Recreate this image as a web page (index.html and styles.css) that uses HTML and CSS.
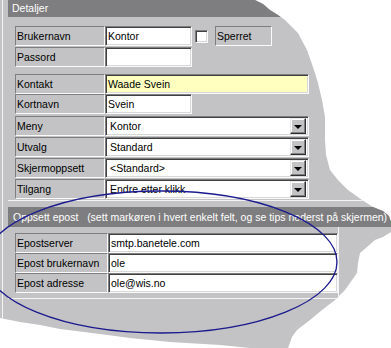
FILE: index.html
```html
<!DOCTYPE html>
<html lang="no">
<head>
<meta charset="utf-8">
<title>Detaljer</title>
<link rel="stylesheet" href="styles.css">
</head>
<body>
<div class="stage">
  <div class="sheet">
    <div class="frame">
      <section class="panel">
        <div class="hdr">Detaljer</div>
        <div class="body">
          <div class="group g1">
            <div class="row">
              <div class="lbl">Brukernavn</div>
              <div class="inp w87">Kontor</div>
              <div class="chk"></div>
              <div class="flag">Sperret</div>
            </div>
            <div class="row">
              <div class="lbl">Passord</div>
              <div class="inp w87"></div>
            </div>
          </div>
          <div class="group g2">
            <div class="row">
              <div class="lbl">Kontakt</div>
              <div class="inp w204 yellow">Waade Svein</div>
            </div>
            <div class="row">
              <div class="lbl">Kortnavn</div>
              <div class="inp w87">Svein</div>
            </div>
          </div>
          <div class="group g3">
            <div class="row">
              <div class="lbl">Meny</div>
              <div class="inp w204 sel"><span class="val">Kontor</span><span class="btn"><i></i></span></div>
            </div>
            <div class="row">
              <div class="lbl">Utvalg</div>
              <div class="inp w204 sel"><span class="val">Standard</span><span class="btn"><i></i></span></div>
            </div>
            <div class="row">
              <div class="lbl">Skjermoppsett</div>
              <div class="inp w204 sel"><span class="val">&lt;Standard&gt;</span><span class="btn"><i></i></span></div>
            </div>
            <div class="row">
              <div class="lbl">Tilgang</div>
              <div class="inp w204 sel"><span class="val">Endre etter klikk</span><span class="btn"><i></i></span></div>
            </div>
          </div>
        </div>
      </section>
      <section class="panel epost">
        <div class="hdr hdr2">Oppsett epost   (sett markøren i hvert enkelt felt, og se tips nederst på skjermen)</div>
        <div class="body body2">
          <div class="group g4">
            <div class="row">
              <div class="lbl wide">Epostserver</div>
              <div class="inp w230">smtp.banetele.com</div>
            </div>
            <div class="row">
              <div class="lbl wide">Epost brukernavn</div>
              <div class="inp w230">ole</div>
            </div>
            <div class="row">
              <div class="lbl wide">Epost adresse</div>
              <div class="inp w230">ole@wis.no</div>
            </div>
          </div>
        </div>
      </section>
    </div>
  </div>
  <svg class="mark" viewBox="0 0 391 348" width="391" height="348" aria-hidden="true">
    <ellipse cx="161" cy="262" rx="176" ry="71" fill="none" stroke="#1a1a8e" stroke-width="1.3"/>
  </svg>
</div>
</body>
</html>
```

FILE: styles.css
```css
html, body {
  margin: 0;
  padding: 0;
  background: #ffffff;
}

.stage {
  position: relative;
  width: 391px;
  height: 348px;
  overflow: hidden;
}

.sheet {
  width: 391px;
  height: 348px;
  background: #c3c3c5;
  padding-left: 2px;
  box-sizing: border-box;
  font-family: "Liberation Sans", Arial, sans-serif;
  font-size: 10.5px;
  color: #000;
  clip-path: polygon(0px 0px, 255px 0px, 263px 4px, 270px 10px, 278px 15px, 285px 20px, 298px 33px, 307px 50px, 313px 67px, 318px 83px, 322px 100px, 325px 117px, 325px 140px, 326px 155px, 330px 170px, 338px 180px, 348px 190px, 362px 200px, 373px 207px, 383px 211px, 389px 216px, 391px 222px, 391px 232px, 383px 237px, 375px 240px, 367px 247px, 360px 253px, 358px 263px, 357px 273px, 350px 283px, 345px 290px, 335px 300px, 322px 310px, 310px 320px, 297px 330px, 292px 337px, 288px 348px, 250px 348px, 220px 345px, 170px 342px, 130px 338px, 100px 334px, 60px 329px, 40px 325px, 20px 322px, 0px 318px);
}

.frame {
  height: 100%;
  border-left: 1px solid #f4f4f4;
  padding-left: 5px;
}

.hdr {
  height: 17px;
  line-height: 17px;
  background: #7e7e80;
  color: #ffffff;
  padding-left: 4px;
  white-space: pre;
}

.hdr2 {
  height: 20px;
  line-height: 20px;
  padding-left: 5px;
}

.body {
  padding: 9px 0 1px 7px;
  border-bottom: 1px solid #f4f4f4;
}

.body2 {
  width: 323px;
  padding: 6px 0 5px 7px;
  border-right: 1px solid #f4f4f4;
}

.epost {
  margin-top: 6px;
}

.group {
  display: flex;
  flex-direction: column;
  gap: 1px;
}

.g2 {
  margin-top: 7px;
  gap: 0;
}

.g3 {
  margin-top: 2px;
}

.g4 {
  gap: 0;
}

.row {
  display: flex;
  align-items: center;
  height: 20px;
}

.lbl {
  width: 90px;
  height: 20px;
  box-sizing: border-box;
  border-top: 1px solid #7e7e80;
  border-left: 1px solid #7e7e80;
  border-bottom: 1px solid #fafafa;
  border-right: 1px solid #fafafa;
  padding-left: 1px;
  line-height: 18px;
  white-space: nowrap;
}

.lbl.wide {
  width: 93px;
}

.inp {
  height: 20px;
  box-sizing: border-box;
  background: #ffffff;
  border-top: 1px solid #7e7e80;
  border-left: 1px solid #7e7e80;
  border-bottom: 1px solid #fafafa;
  border-right: 1px solid #fafafa;
  box-shadow: inset 1px 1px 0 #404040, inset -1px -1px 0 #d8d8d8;
  padding-left: 2px;
  line-height: 18px;
  white-space: nowrap;
  overflow: hidden;
}

.w87 { width: 87px; }
.w204 { width: 204px; }
.w230 { width: 230px; }

.yellow {
  background: #ffffc0;
}

.sel {
  display: flex;
  align-items: center;
  padding-left: 4px;
  padding-right: 2px;
}

.sel .val {
  flex: 1;
}

.btn {
  width: 16px;
  height: 16px;
  box-sizing: border-box;
  background: #c3c3c5;
  border-top: 1px solid #e8e8e8;
  border-left: 1px solid #e8e8e8;
  border-right: 1px solid #303030;
  border-bottom: 1px solid #303030;
  box-shadow: inset -1px -1px 0 #808080, inset 1px 1px 0 #ffffff;
  display: flex;
  align-items: center;
  justify-content: center;
}

.btn i {
  width: 0;
  height: 0;
  border-left: 4px solid transparent;
  border-right: 4px solid transparent;
  border-top: 4px solid #000;
  margin-top: 1px;
}

.chk {
  width: 13px;
  height: 13px;
  box-sizing: border-box;
  margin-left: 3px;
  background: #ffffff;
  border-top: 1px solid #7e7e80;
  border-left: 1px solid #7e7e80;
  border-bottom: 1px solid #fafafa;
  border-right: 1px solid #fafafa;
  box-shadow: inset 1px 1px 0 #404040, inset -1px -1px 0 #d8d8d8;
}

.flag {
  width: 57px;
  height: 20px;
  box-sizing: border-box;
  margin-left: 7px;
  border-top: 1px solid #7e7e80;
  border-left: 1px solid #7e7e80;
  border-bottom: 1px solid #fafafa;
  border-right: 1px solid #fafafa;
  padding-left: 1px;
  line-height: 18px;
}

.mark {
  position: absolute;
  left: 0;
  top: 0;
  pointer-events: none;
}
```
